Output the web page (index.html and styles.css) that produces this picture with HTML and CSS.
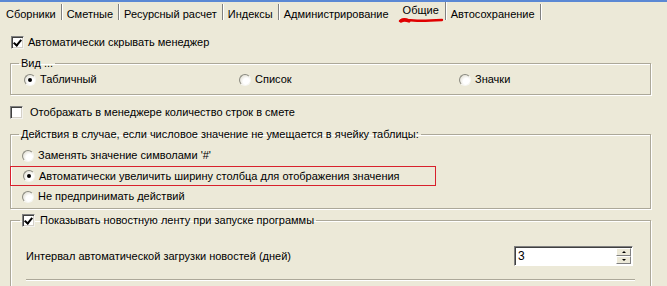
FILE: index.html
```html
<!DOCTYPE html>
<html lang="ru">
<head>
    <meta charset="UTF-8">
    <title>Настройки</title>
    <link rel="stylesheet" href="styles.css">
</head>
<body>
    <div class="frame-top"></div>

    <!-- Tabs -->
    <nav class="tabs">
        <span class="tab">Сборники</span>
        <span class="tab">Сметные</span>
        <span class="tab">Ресурсный расчет</span>
        <span class="tab">Индексы</span>
        <span class="tab tab-before-active">Администрирование</span>
        <span class="tab tab-active">Общие
            <svg class="scribble" width="48" height="6" viewBox="0 0 48 6">
                <path d="M2 4 C4 2 7 2 10 3 C16 4 28 4 44 3" stroke="#e00000" stroke-width="2.4" fill="none" stroke-linecap="round"/>
                <path d="M3 4 C5 3 8 3 11 4" stroke="#e00000" stroke-width="3.2" fill="none" stroke-linecap="round"/>
            </svg>
        </span>
        <span class="tab">Автосохранение</span>
    </nav>

    <main class="page">
        <div class="row row-hide">
            <span class="check on"></span>Автоматически скрывать менеджер
        </div>

        <fieldset class="group group-view">
            <legend>Вид ...</legend>
            <div class="view-options">
                <span class="opt opt-table"><span class="radio on"></span>Табличный</span>
                <span class="opt opt-list"><span class="radio"></span>Список</span>
                <span class="opt opt-icons"><span class="radio"></span>Значки</span>
            </div>
        </fieldset>

        <div class="row row-count">
            <span class="check"></span>Отображать в менеджере количество строк в смете
        </div>

        <fieldset class="group group-actions">
            <legend>Действия в случае, если числовое значение не умещается в ячейку таблицы:</legend>
            <div class="choice"><span class="radio"></span>Заменять значение символами '#'</div>
            <div class="choice choice-marked"><span class="radio on"></span>Автоматически увеличить ширину столбца для отображения значения</div>
            <div class="choice"><span class="radio"></span>Не предпринимать действий</div>
        </fieldset>

        <fieldset class="group group-news">
            <legend><span class="check on"></span>Показывать новостную ленту при запуске программы</legend>
            <div class="interval">
                <span>Интервал автоматической загрузки новостей (дней)</span>
                <div class="spin">
                    <span class="spin-value">3</span>
                    <span class="spin-buttons">
                        <span class="spin-btn up"></span>
                        <span class="spin-btn down"></span>
                    </span>
                </div>
            </div>
            <div class="divider"></div>
        </fieldset>
    </main>
</body>
</html>
```

FILE: styles.css
```css
/* General */
html, body {
    margin: 0;
    height: 100%;
    overflow: hidden;
}

body {
    background: #ece9d8;
    font-family: 'Liberation Sans', Arial, sans-serif;
    font-size: 11px;
    line-height: 13px;
    color: #000;
}

.frame-top {
    height: 2px;
    background: #5b88d4;
}

/* Tabs */
.tabs {
    display: flex;
    height: 18px;
    padding-left: 1px;
}

.tab {
    position: relative;
    display: flex;
    align-items: center;
    margin-top: 2px;
    padding: 4px 5px 0 5px;
    border-right: 1px solid #808080;
    box-shadow: 1px 0 0 #fff;
    white-space: nowrap;
}

.tab-before-active {
    border-right: none;
    box-shadow: none;
    padding-right: 9px;
}

.tab-active {
    margin-top: 0;
    padding: 1px 6px 2px 5px;
    box-shadow: 1px 0 0 #fff;
}

.scribble {
    position: absolute;
    left: 0;
    bottom: -3px;
}

/* Page */
.page {
    padding: 0 16px 0 10px;
}

.row {
    display: flex;
    align-items: center;
    height: 13px;
}

.row-hide {
    margin: 16px 0 0 1px;
}

.row-hide .check {
    margin-right: 4px;
}

.row-count {
    margin: 11px 0 0 0;
}

.row-count .check {
    margin-right: 7px;
}

/* Check box and radio */
.check {
    position: relative;
    flex: none;
    box-sizing: border-box;
    width: 13px;
    height: 13px;
    margin-right: 5px;
    background: #fff;
    border: 1px solid;
    border-color: #808080 #f4f3ee #f4f3ee #808080;
    box-shadow: inset 1px 1px 0 #404040, inset -1px -1px 0 #d4d0c8;
}

.check.on::after {
    content: "";
    position: absolute;
    left: 3px;
    top: 1px;
    width: 3px;
    height: 6px;
    border: solid #000;
    border-width: 0 2px 2px 0;
    transform: rotate(40deg);
}

.radio {
    position: relative;
    flex: none;
    box-sizing: border-box;
    width: 12px;
    height: 12px;
    margin-right: 4px;
    border-radius: 50%;
    border: 1px solid;
    border-color: #8a8a80 #f6f6f2 #f6f6f2 #8a8a80;
    background: radial-gradient(circle at 65% 65%, #fff 35%, #e4e2d8 75%, #c4c2b6 100%);
}

.radio.on::after {
    content: "";
    position: absolute;
    left: 3px;
    top: 3px;
    width: 4px;
    height: 4px;
    border-radius: 50%;
    background: #000;
}

/* Groups */
.group {
    box-sizing: border-box;
    width: 641px;
    margin: 0;
    padding: 0;
    border: 1px solid #aca899;
    box-shadow: 1px 1px 0 #fff, inset 1px 1px 0 #fff;
}

.group legend {
    display: flex;
    align-items: center;
    height: 13px;
    padding: 0 2px;
    margin-left: 8px;
}

.group-view {
    margin-top: 8px;
}

.view-options {
    display: flex;
    align-items: center;
    height: 13px;
    padding: 3px 0 8px 13px;
}

.opt {
    display: flex;
    align-items: center;
}

.opt-table { width: 215px; }
.opt-list { width: 220px; }

.group-actions {
    margin-top: 9px;
    padding: 4px 0 1px 0;
}

.choice {
    display: flex;
    align-items: center;
    height: 21px;
    padding-left: 11px;
}

.choice-marked {
    box-sizing: border-box;
    width: 426px;
    height: 20px;
    margin-left: -1px;
    padding-left: 12px;
    border: 1px solid #d8202c;
}

.group-news {
    margin-top: 5px;
    padding: 0 17px 20px 15px;
}

.group-news legend {
    margin-left: -6px;
}

.group-news legend .check {
    margin-right: 5px;
}

.interval {
    display: flex;
    align-items: center;
    justify-content: space-between;
    margin-top: 19px;
}

/* Spin edit */
.spin {
    box-sizing: border-box;
    display: flex;
    justify-content: space-between;
    width: 119px;
    height: 20px;
    padding: 1px;
    background: #fff;
    border: 1px solid;
    border-color: #808080 #fff #fff #808080;
    box-shadow: inset 1px 1px 0 #404040;
}

.spin-value {
    padding: 2px 0 0 2px;
    font-size: 12px;
}

.spin-buttons {
    display: flex;
    flex-direction: column;
    justify-content: space-between;
    width: 15px;
}

.spin-btn {
    position: relative;
    box-sizing: border-box;
    height: 8px;
    background: #ece9d8;
    border: 1px solid;
    border-color: #fff #808080 #808080 #fff;
}

.spin-btn::after {
    content: "";
    position: absolute;
    left: 5px;
    border-left: 2px solid transparent;
    border-right: 2px solid transparent;
}

.spin-btn.up::after {
    top: 2px;
    border-bottom: 2px solid #000;
}

.spin-btn.down::after {
    top: 2px;
    border-top: 2px solid #000;
}

.divider {
    margin: 13px -2px 0 0;
    border-top: 1px solid #aca899;
    border-bottom: 1px solid #fff;
}
```
